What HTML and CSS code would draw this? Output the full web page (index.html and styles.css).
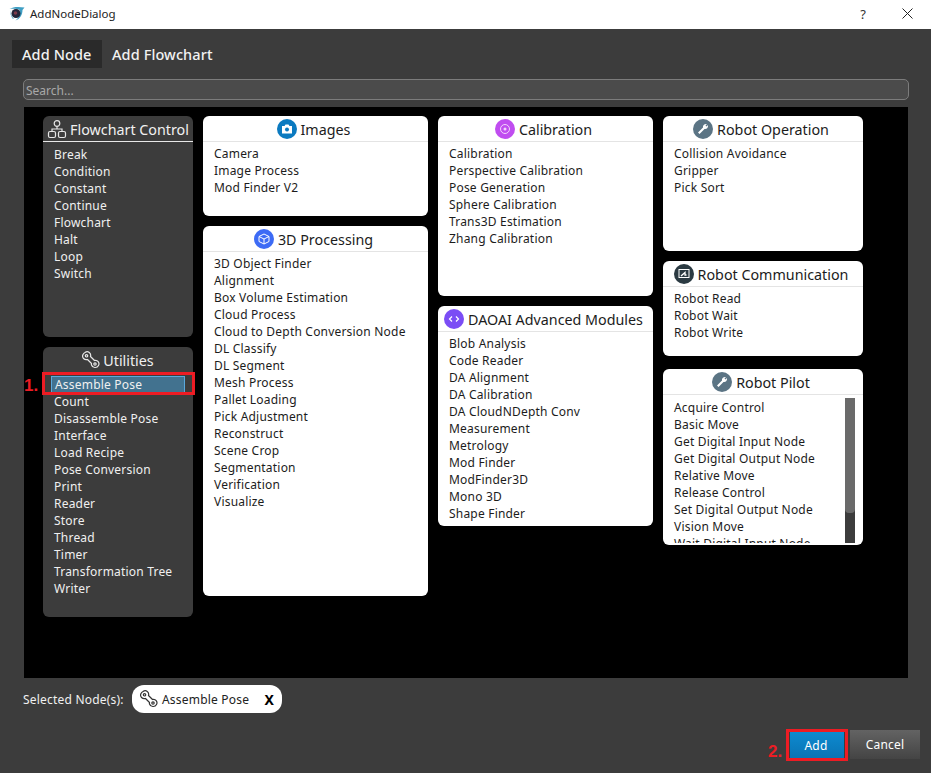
FILE: index.html
```html
<!DOCTYPE html>
<html lang="en">
<head>
    <meta charset="UTF-8">
    <title>AddNodeDialog</title>
    <link rel="stylesheet" href="styles.css">
</head>
<body>
    <div class="titlebar">
        <svg class="app-icon" width="16" height="16" viewBox="0 0 16 16">
            <path d="M.5 3 C4 .5 10 .5 15.500 1.500 L13.500 4 C13.500 9 11 13 6.500 14.500 C10 12 11.500 8 11 4 C8 2.500 4 2.500 .5 3Z" fill="#3f9fc4"/>
            <path d="M1 4 C1.500 8 3 11 5 13 L3.500 12.500 C2 10 1 7 1 4Z" fill="#3f9fc4"/>
            <circle cx="7" cy="7.500" r="4.500" fill="#23263a"/>
            <circle cx="6.500" cy="7" r="1.800" fill="#7d3b4c"/>
        </svg>
        <span class="title">AddNodeDialog</span>
        <span class="help">?</span>
        <svg class="close" width="11" height="11" viewBox="0 0 11 11"><path d="M.5 .5 L10.500 10.500 M10.500 .5 L.5 10.500" stroke="#222" stroke-width="1" fill="none"/></svg>
    </div>

    <div class="dialog">
        <div class="tabs">
            <div class="tab active">Add Node</div>
            <div class="tab">Add Flowchart</div>
        </div>
        <div class="search">Search...</div>

        <div class="canvas">
            <div class="column col-1">
                <div class="card dark h-221">
                    <div class="card-head">
                        <svg class="head-svg" width="20" height="20" viewBox="0 0 20 20" fill="none" stroke="#e6e6e6" stroke-width="1.200">
                            <circle cx="10" cy="4.500" r="2.800"/>
                            <rect x="1.500" y="12.500" width="7" height="6" rx="1.500"/>
                            <rect x="11.500" y="12.500" width="7" height="6" rx="1.500"/>
                            <path d="M10 7.300 V10 M5 12.500 V10 H15 V12.500"/>
                        </svg>
                        Flowchart Control
                    </div>
                    <ul class="items push">
                        <li>Break</li><li>Condition</li><li>Constant</li><li>Continue</li>
                        <li>Flowchart</li><li>Halt</li><li>Loop</li><li>Switch</li>
                    </ul>
                </div>
                <div class="card dark h-270">
                    <div class="card-head no-line">
                        <svg class="head-svg" width="18" height="18" viewBox="0 0 18 18" fill="none" stroke="#e6e6e6" stroke-width="1.200">
                            <path d="M3 1.500 C6 -.5 9.500 2 8.500 5.500 L12.500 9.500 C15.500 8.500 18 12 16.500 14.500 C15 17.500 10.500 17 9.500 14 C9.300 13.500 9.400 13 9.500 12.500 L5.500 8.500 C2.500 9.500 -.5 6.500 1 3.500 C1.500 2.500 2 2 3 1.500Z"/>
                            <circle cx="4.500" cy="4.800" r="1.200"/>
                            <circle cx="13" cy="13" r="1.200"/>
                        </svg>
                        Utilities
                    </div>
                    <ul class="items">
                        <li class="selected">Assemble Pose</li>
                        <li>Count</li><li>Disassemble Pose</li><li>Interface</li><li>Load Recipe</li>
                        <li>Pose Conversion</li><li>Print</li><li>Reader</li><li>Store</li><li>Thread</li>
                        <li>Timer</li><li>Transformation Tree</li><li>Writer</li>
                    </ul>
                </div>
            </div>

            <div class="column col-2">
                <div class="card h-100">
                    <div class="card-head shift">
                        <span class="badge blue">
                            <svg width="12" height="12" viewBox="0 0 12 12"><path d="M1 3 H3.500 L4.500 1.500 H7.500 L8.500 3 H11 V10.500 H1Z" fill="#fff"/><circle cx="6" cy="6.500" r="2" fill="#0b7ac0"/></svg>
                        </span>
                        Images
                    </div>
                    <ul class="items">
                        <li>Camera</li><li>Image Process</li><li>Mod Finder V2</li>
                    </ul>
                </div>
                <div class="card h-370">
                    <div class="card-head shift">
                        <span class="badge indigo">
                            <svg width="12" height="12" viewBox="0 0 12 12" fill="none" stroke="#fff" stroke-width="1"><path d="M6 1 L11 3.500 V8.500 L6 11 L1 8.500 V3.500Z M1 3.500 L6 6 L11 3.500 M6 6 V11"/></svg>
                        </span>
                        3D Processing
                    </div>
                    <ul class="items">
                        <li>3D Object Finder</li><li>Alignment</li><li>Box Volume Estimation</li><li>Cloud Process</li>
                        <li>Cloud to Depth Conversion Node</li><li>DL Classify</li><li>DL Segment</li><li>Mesh Process</li>
                        <li>Pallet Loading</li><li>Pick Adjustment</li><li>Reconstruct</li><li>Scene Crop</li>
                        <li>Segmentation</li><li>Verification</li><li>Visualize</li>
                    </ul>
                </div>
            </div>

            <div class="column col-3">
                <div class="card h-180">
                    <div class="card-head shift">
                        <span class="badge purple">
                            <svg width="12" height="12" viewBox="0 0 12 12" fill="none" stroke="#f3d4fb" stroke-width="1"><circle cx="6" cy="6" r="4.500"/><circle cx="6" cy="6" r="1.500" fill="#f3d4fb" stroke="none"/></svg>
                        </span>
                        Calibration
                    </div>
                    <ul class="items">
                        <li>Calibration</li><li>Perspective Calibration</li><li>Pose Generation</li>
                        <li>Sphere Calibration</li><li>Trans3D Estimation</li><li>Zhang Calibration</li>
                    </ul>
                </div>
                <div class="card h-220">
                    <div class="card-head shift">
                        <span class="badge violet">
                            <svg width="12" height="12" viewBox="0 0 12 12" fill="none" stroke="#fff" stroke-width="1.200"><path d="M4 3.500 L1.500 6 L4 8.500 M8 3.500 L10.500 6 L8 8.500"/></svg>
                        </span>
                        DAOAI Advanced Modules
                    </div>
                    <ul class="items">
                        <li>Blob Analysis</li><li>Code Reader</li><li>DA Alignment</li><li>DA Calibration</li>
                        <li>DA CloudNDepth Conv</li><li>Measurement</li><li>Metrology</li><li>Mod Finder</li>
                        <li>ModFinder3D</li><li>Mono 3D</li><li>Shape Finder</li>
                    </ul>
                </div>
            </div>

            <div class="column col-4">
                <div class="card h-135">
                    <div class="card-head shift">
                        <span class="badge slate">
                            <svg width="12" height="12" viewBox="0 0 12 12"><path d="M1 9.500 L6 4.500 C5.500 2.500 7.500 .5 10 1 L8.500 2.500 L9.500 3.500 L11 2 C11.500 4.500 9.500 6.500 7.500 6 L2.500 11Z" fill="#fff"/></svg>
                        </span>
                        Robot Operation
                    </div>
                    <ul class="items">
                        <li>Collision Avoidance</li><li>Gripper</li><li>Pick Sort</li>
                    </ul>
                </div>
                <div class="card h-95">
                    <div class="card-head shift">
                        <span class="badge ink">
                            <svg width="12" height="12" viewBox="0 0 12 12" fill="none" stroke="#fff" stroke-width="1"><rect x="1" y="1.500" width="10" height="8"/><path d="M3 8 L7 4.500 V7 H8.500" stroke-width="1.300"/></svg>
                        </span>
                        Robot Communication
                    </div>
                    <ul class="items">
                        <li>Robot Read</li><li>Robot Wait</li><li>Robot Write</li>
                    </ul>
                </div>
                <div class="card h-176 pilot">
                    <div class="card-head shift">
                        <span class="badge slate">
                            <svg width="12" height="12" viewBox="0 0 12 12"><path d="M1 9.500 L6 4.500 C5.500 2.500 7.500 .5 10 1 L8.500 2.500 L9.500 3.500 L11 2 C11.500 4.500 9.500 6.500 7.500 6 L2.500 11Z" fill="#fff"/></svg>
                        </span>
                        Robot Pilot
                    </div>
                    <div class="scroll-area">
                        <ul class="items push">
                            <li>Acquire Control</li><li>Basic Move</li><li>Get Digital Input Node</li><li>Get Digital Output Node</li>
                            <li>Relative Move</li><li>Release Control</li><li>Set Digital Output Node</li><li>Vision Move</li>
                            <li>Wait Digital Input Node</li>
                        </ul>
                        <div class="scrollbar"><div class="thumb"></div></div>
                    </div>
                </div>
            </div>
        </div>

        <div class="selected-row">
            <span class="selected-label">Selected Node(s):</span>
            <div class="chip">
                <svg width="18" height="18" viewBox="0 0 18 18" fill="none" stroke="#333" stroke-width="1.200">
                    <path d="M3 1.500 C6 -.5 9.500 2 8.500 5.500 L12.500 9.500 C15.500 8.500 18 12 16.500 14.500 C15 17.500 10.500 17 9.500 14 C9.300 13.500 9.400 13 9.500 12.500 L5.500 8.500 C2.500 9.500 -.5 6.500 1 3.500 C1.500 2.500 2 2 3 1.500Z"/>
                    <circle cx="4.500" cy="4.800" r="1.200"/>
                    <circle cx="13" cy="13" r="1.200"/>
                </svg>
                <span class="chip-label">Assemble Pose</span>
                <span class="chip-x">X</span>
            </div>
        </div>

        <div class="buttons">
            <button class="btn add">Add</button>
            <button class="btn cancel">Cancel</button>
        </div>
    </div>

    <div class="mark box-1"></div>
    <div class="mark box-2"></div>
    <span class="step step-1">1.</span>
    <span class="step step-2">2.</span>
</body>
</html>
```

FILE: styles.css
```css
html, body {
    margin: 0;
    height: 773px;
    overflow: hidden;
}
body {
    font-family: "Noto Sans", "Open Sans", sans-serif;
    font-size: 12px;
    letter-spacing: .2px;
    background-color: #3c3c3c;
    position: relative;
}
.titlebar {
    height: 27px;
    padding: 0 0 2px 9px;
    background-color: white;
    display: flex;
    align-items: center;
    color: #222;
}
.app-icon {
    margin-right: 5px;
}
.title {
    flex: 1;
    font-size: 11.5px;
    letter-spacing: 0;
}
.help {
    font-size: 13px;
    margin-right: 36px;
    color: #333;
}
.close {
    margin-right: 18px;
}
.dialog {
    padding: 11px 22px 0 23px;
}
.tabs {
    display: flex;
    margin-left: -11px;
    height: 28px;
}
.tab {
    font-size: 14.5px;
    letter-spacing: .1px;
    font-weight: 500;
    color: #f2f2f2;
    padding: 0 10px;
    line-height: 29px;
}
.tab.active {
    width: 70px;
    background-color: #2a2a2a;
}
.search {
    margin-top: 11px;
    height: 19px;
    line-height: 21px;
    width: 882px;
    padding-left: 2px;
    background-color: #4b4b4b;
    border: 1px solid #7c7c7c;
    border-radius: 5px;
    color: #a8a8a8;
    letter-spacing: 0;
}
.canvas {
    margin: 7px 0 0 1px;
    height: 562px;
    width: 865px;
    padding: 9px 0 0 19px;
    background-color: black;
    display: flex;
    gap: 10px;
}
.column {
    display: flex;
    flex-direction: column;
    gap: 10px;
}
.col-1 { width: 150px; }
.col-2 { width: 225px; }
.col-3 { width: 215px; }
.col-4 { width: 200px; }

.card {
    background-color: white;
    color: #1c1c1c;
    border-radius: 6px;
    overflow: hidden;
    flex: none;
}
.card.dark {
    background-color: #3c3c3c;
    color: #f0f0f0;
}
.h-95 { height: 95px; }
.h-100 { height: 100px; }
.h-135 { height: 135px; }
.h-176 { height: 176px; }
.h-180 { height: 180px; }
.h-220 { height: 220px; }
.h-221 { height: 221px; }
.h-270 { height: 270px; }
.h-370 { height: 370px; }
.pilot { margin-top: 3px; }

.card-head {
    height: 24px;
    padding-top: 1px;
    border-bottom: 1px solid #e4e4e4;
    display: flex;
    align-items: center;
    justify-content: center;
    gap: 4px;
    font-size: 14.3px;
    letter-spacing: 0;
    white-space: nowrap;
}
.card-head.shift {
    padding-right: 4px;
}
.card-head .badge {
    margin-top: -1px;
}
.head-svg {
    margin: -1px -1px 0 0;
}
.dark .card-head {
    border-bottom-color: #e8e8e8;
}
.dark .card-head.no-line {
    border-bottom-color: transparent;
}
.badge {
    width: 20px;
    height: 20px;
    border-radius: 50%;
    display: flex;
    align-items: center;
    justify-content: center;
}
.blue { background-color: #0b7ac0; }
.indigo { background-color: #3d6bf5; }
.purple { background-color: #c04df0; }
.violet { background-color: #7b4df5; }
.slate { background-color: #5b7484; }
.ink { background-color: #2b3a42; }

.items {
    list-style: none;
    margin: 0;
    padding: 3px 0 0 11px;
}
.items.push {
    padding-top: 4px;
}
.items li {
    height: 17px;
    line-height: 17px;
    white-space: nowrap;
}
.items li.selected {
    height: 15px;
    line-height: 15px;
    width: 129px;
    margin-left: -3px;
    padding-left: 3px;
    background-color: #42728f;
    border: 1px solid #5aa8dc;
}
.scroll-area {
    position: relative;
    height: 148px;
    overflow: hidden;
}
.scrollbar {
    position: absolute;
    top: 3px;
    right: 8px;
    bottom: 0;
    width: 10px;
    background-color: #3c3c3c;
}
.thumb {
    height: 115px;
    background-color: #6a6a6a;
    border-radius: 0 0 4px 4px;
}

.selected-row {
    margin-top: 7px;
    height: 28px;
    display: flex;
    align-items: center;
    color: #f0f0f0;
}
.selected-label {
    width: 109px;
}
.chip {
    width: 150px;
    height: 28px;
    box-sizing: border-box;
    background-color: white;
    border-radius: 12px;
    display: flex;
    align-items: center;
    padding: 0 8px 0 8px;
    color: #222;
}
.chip-label {
    flex: 1;
    margin-left: 4px;
}
.chip-x {
    font-weight: 700;
    font-size: 14px;
    color: black;
}
.buttons {
    display: flex;
    justify-content: flex-end;
    gap: 6px;
    margin: 17px -11px 0 0;
}
.btn {
    font-family: inherit;
    font-size: 12px;
    letter-spacing: .2px;
    color: white;
    border: none;
    padding: 0;
    height: 26px;
}
.add {
    width: 54px;
    margin-top: 2px;
    padding-right: 2px;
    background: linear-gradient(#0d8ad0, #0a74b4);
}
.cancel {
    width: 70px;
    height: 29px;
    background: linear-gradient(#636363, #444);
}
.mark {
    position: absolute;
    border: 3px solid #ed1c24;
    box-sizing: border-box;
}
.box-1 {
    left: 42px;
    top: 372px;
    width: 153px;
    height: 23px;
}
.box-2 {
    left: 786px;
    top: 729px;
    width: 62px;
    height: 32px;
}
.step {
    position: absolute;
    color: #ed1c24;
    font-weight: 700;
    font-size: 17px;
    letter-spacing: 0;
    font-family: "Liberation Sans", sans-serif;
}
.step-1 {
    left: 24px;
    top: 376px;
}
.step-2 {
    left: 768px;
    top: 742px;
}
```
